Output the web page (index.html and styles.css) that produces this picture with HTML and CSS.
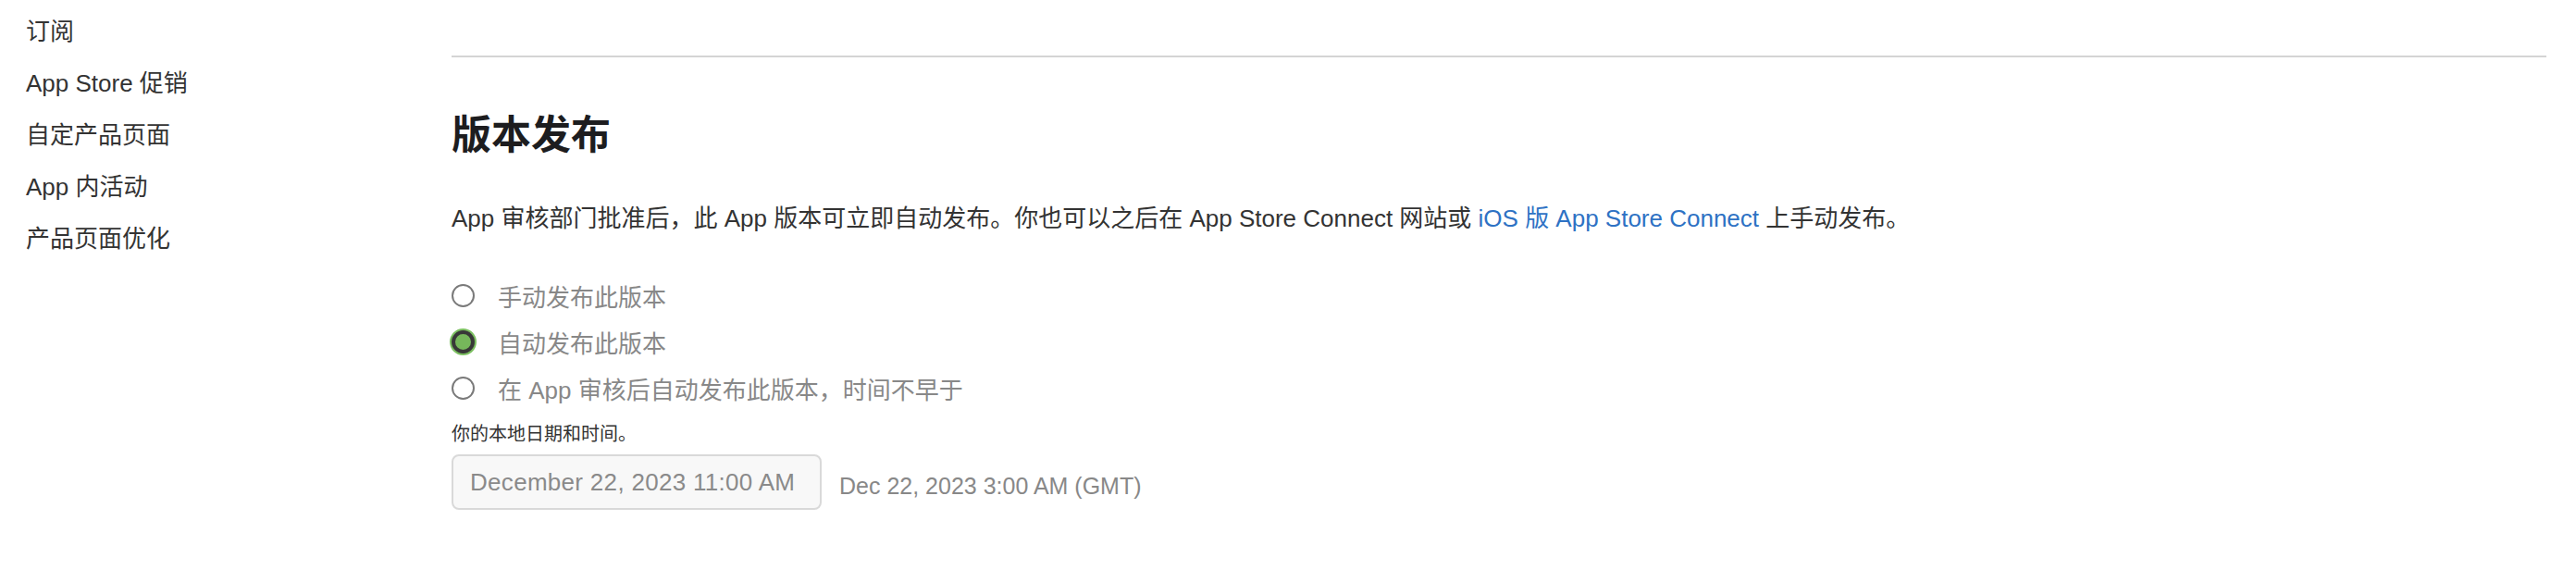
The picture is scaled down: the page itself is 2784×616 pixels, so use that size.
FILE: index.html
```html
<!DOCTYPE html>
<html lang="zh-CN">
<head>
    <meta charset="UTF-8">
    <meta name="viewport" content="width=device-width, initial-scale=1.0">
    <title>版本发布</title>
    <link rel="stylesheet" href="styles.css">
</head>
<body>
    <div class="page">
        <aside class="sidebar">
            <ul>
                <li><a href="#">订阅</a></li>
                <li><a href="#">App Store 促销</a></li>
                <li><a href="#">自定产品页面</a></li>
                <li><a href="#">App 内活动</a></li>
                <li><a href="#">产品页面优化</a></li>
            </ul>
        </aside>
        <main class="content">
            <section class="release">
                <h2>版本发布</h2>
                <p class="intro">App 审核部门批准后，此 App 版本可立即自动发布。你也可以之后在 App Store Connect 网站或 <a href="#">iOS 版 App Store Connect</a> 上手动发布。</p>
                <div class="options">
                    <label class="option">
                        <span class="radio"></span>
                        <span>手动发布此版本</span>
                    </label>
                    <label class="option">
                        <span class="radio checked"></span>
                        <span>自动发布此版本</span>
                    </label>
                    <label class="option">
                        <span class="radio"></span>
                        <span>在 App 审核后自动发布此版本，时间不早于</span>
                    </label>
                </div>
                <div class="schedule">
                    <div class="hint">你的本地日期和时间。</div>
                    <div class="datetime-row">
                        <div class="date-input">December 22, 2023 11:00 AM</div>
                        <span class="gmt">Dec 22, 2023 3:00 AM (GMT)</span>
                    </div>
                </div>
            </section>
        </main>
    </div>
</body>
</html>
```

FILE: styles.css
```css
body {
    font-family: "Liberation Sans", "Noto Sans CJK SC", sans-serif;
    margin: 0;
    padding: 0;
    background-color: #fff;
    color: #333;
}

.page {
    display: flex;
}

.sidebar {
    width: 488px;
    flex-shrink: 0;
}

.sidebar ul {
    list-style: none;
    margin: 0;
    padding: 6px 0 0 28px;
}

.sidebar li {
    font-size: 26px;
    line-height: 56px;
}

.sidebar a {
    color: #333;
    text-decoration: none;
}

.content {
    flex: 1;
    padding: 60px 32px 0 0;
}

.release {
    border-top: 2px solid #d4d4d4;
}

.release h2 {
    margin: 59px 0 0;
    font-size: 43px;
    line-height: 50px;
    font-weight: bold;
    color: #1d1d1f;
}

.intro {
    margin: 47px 0 0;
    font-size: 26px;
    line-height: 36px;
    color: #333;
}

.intro a {
    color: #2e72c4;
    text-decoration: none;
}

.options {
    margin-top: 40px;
    display: flex;
    flex-direction: column;
}

.option {
    display: flex;
    align-items: center;
    height: 50px;
    font-size: 26px;
    color: #888;
}

.radio {
    width: 25px;
    height: 25px;
    box-sizing: border-box;
    border: 2px solid #7a7a7a;
    border-radius: 50%;
    margin-right: 25px;
}

.radio.checked {
    background-color: #76b75b;
    border: 4px solid #383838;
    box-shadow: 0 0 0 2px #7cc061;
}

.schedule {
    margin-top: 11px;
}

.hint {
    font-size: 20px;
    line-height: 28px;
    color: #333;
}

.datetime-row {
    display: flex;
    align-items: center;
    margin-top: 8px;
}

.date-input {
    width: 400px;
    height: 60px;
    box-sizing: border-box;
    padding: 0 18px;
    display: flex;
    align-items: center;
    font-size: 26px;
    letter-spacing: 0.3px;
    color: #8a8a8a;
    background-color: #f8f8f8;
    border: 2px solid #d9d9d9;
    border-radius: 8px;
}

.gmt {
    margin-left: 19px;
    margin-top: 8px;
    font-size: 25px;
    color: #888;
}
```
